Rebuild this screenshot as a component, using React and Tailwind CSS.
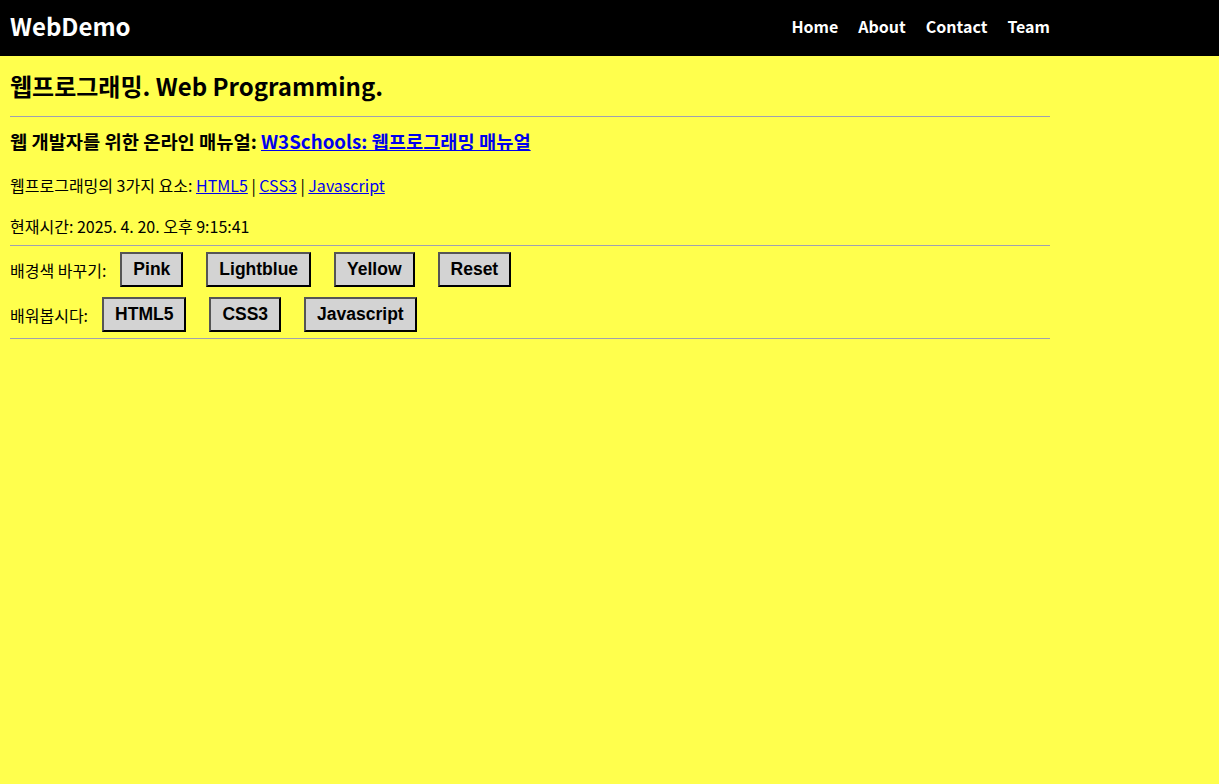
import { useState } from "react";

const kr = { fontFamily: '"Noto Sans CJK KR", "Noto Sans", sans-serif' };
const arial = { fontFamily: '"Liberation Sans", Arial, sans-serif' };

function Btn({ children, onClick }) {
  return (
    <button
      onClick={onClick}
      style={arial}
      className="h-[35px] px-[11px] bg-[#d3d3d3] text-black text-[17.5px] font-bold border-2 border-t-[#555] border-l-[#555] border-r-black border-b-black"
    >
      {children}
    </button>
  );
}

export default function App() {
  const [bg, setBg] = useState("#ffff4d");

  return (
    <div style={{ ...kr, backgroundColor: bg }} className="min-h-[784px] text-black">
      {/* Header */}
      <div className="bg-black h-[56px]">
        <div className="w-[1060px] h-full px-[10px] pb-[4px] flex items-center justify-between">
          <span className="text-white text-[24px] font-bold">WebDemo</span>
          <nav className="flex gap-[20px] text-white text-[16px] font-bold">
            <a href="#">Home</a>
            <a href="#">About</a>
            <a href="#">Contact</a>
            <a href="#">Team</a>
          </nav>
        </div>
      </div>

      <div className="w-[1060px] px-[10px]">
        <h1 className="text-[24px] font-bold h-[60px] flex items-center">
          웹프로그래밍. Web Programming.
        </h1>
        <hr className="border-t border-[#a0a0b0]" />
        <h3 className="text-[18.72px] font-bold h-[50px] pb-[2px] flex items-center">
          웹 개발자를 위한 온라인 매뉴얼:&nbsp;
          <a href="#" className="text-[#0000ee] underline">W3Schools: 웹프로그래밍 매뉴얼</a>
        </h3>
        <p className="text-[16px] h-[40px] pb-[4px] flex items-center">
          웹프로그래밍의 3가지 요소:&nbsp;
          <a href="#" className="text-[#0000ee] underline">HTML5</a>&nbsp;|&nbsp;
          <a href="#" className="text-[#0000ee] underline">CSS3</a>&nbsp;|&nbsp;
          <a href="#" className="text-[#0000ee] underline">Javascript</a>
        </p>
        <p className="text-[16px] h-[38px] flex items-center">현재시간: 2025. 4. 20. 오후 9:15:41</p>
        <hr className="border-t border-[#a0a0b0]" />
        <div className="h-[46px] pt-[6px]">
          <div className="flex items-center h-[35px]">
            <span className="text-[16px] mr-[14px]">배경색 바꾸기:</span>
            <div className="flex gap-[23px]">
              <Btn onClick={() => setBg("pink")}>Pink</Btn>
              <Btn onClick={() => setBg("lightblue")}>Lightblue</Btn>
              <Btn onClick={() => setBg("yellow")}>Yellow</Btn>
              <Btn onClick={() => setBg("#ffff4d")}>Reset</Btn>
            </div>
          </div>
        </div>
        <div className="h-[46px] pt-[5px]">
          <div className="flex items-center h-[35px]">
            <span className="text-[16px] mr-[14px]">배워봅시다:</span>
            <div className="flex gap-[23px]">
              <Btn>HTML5</Btn>
              <Btn>CSS3</Btn>
              <Btn>Javascript</Btn>
            </div>
          </div>
        </div>
        <hr className="border-t border-[#a0a0b0]" />
      </div>
    </div>
  );
}
